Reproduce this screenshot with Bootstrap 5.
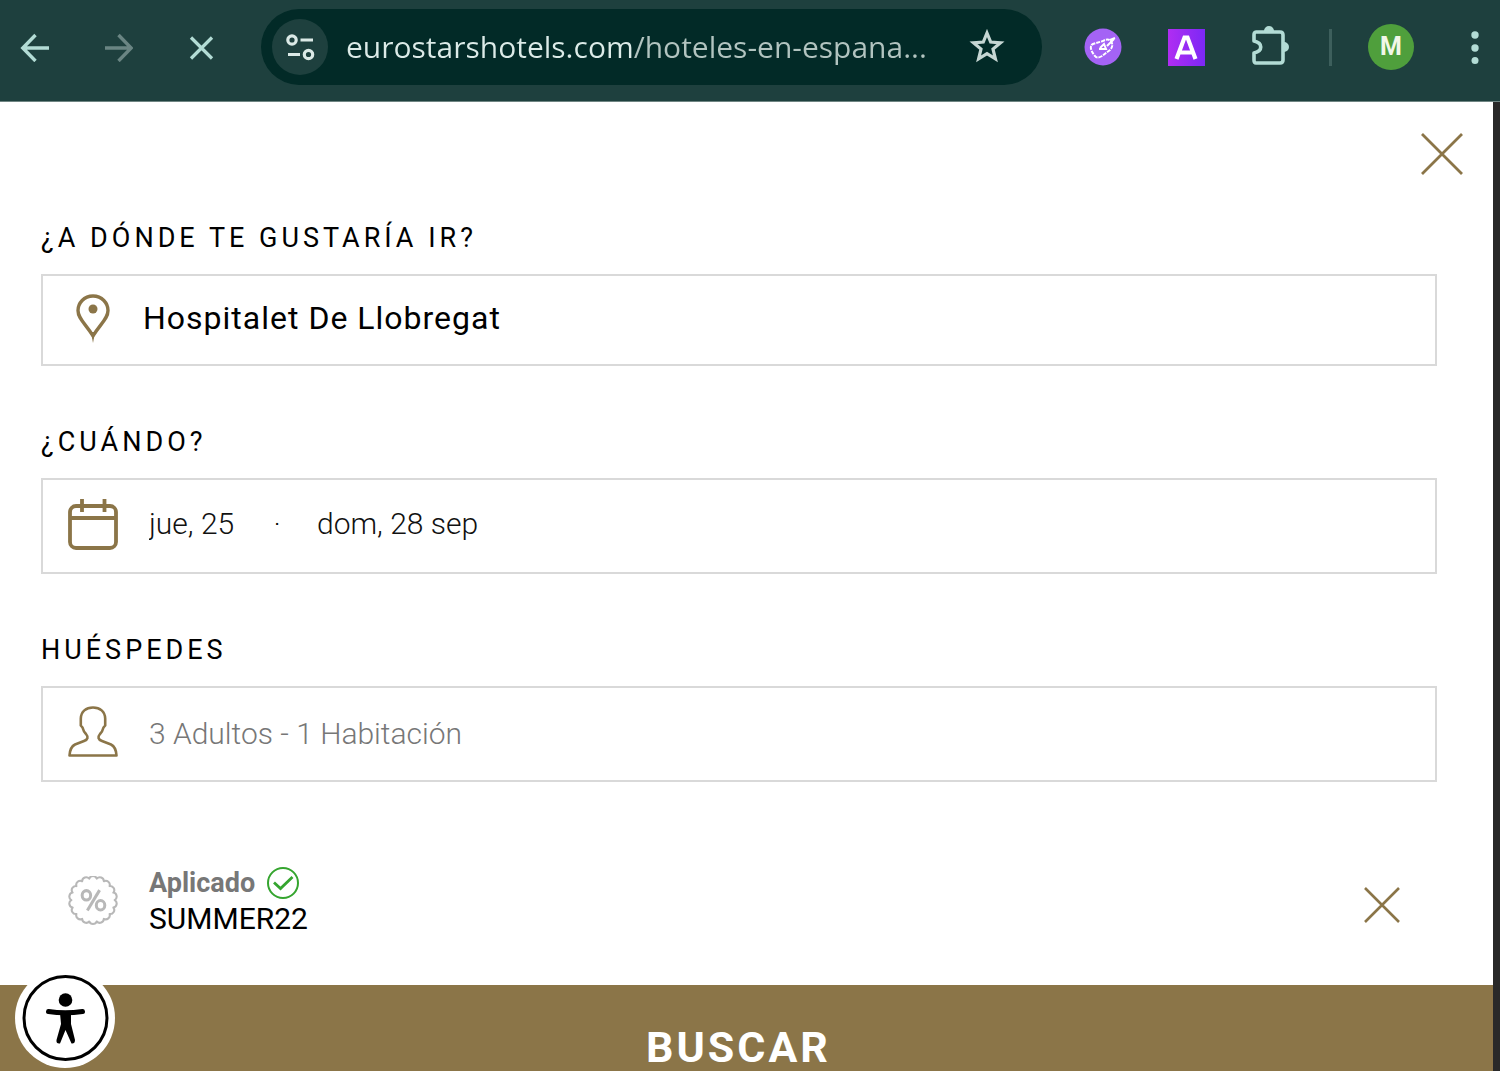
<!DOCTYPE html>
<html lang="es">
<head>
<meta charset="utf-8">
<meta name="viewport" content="width=device-width, initial-scale=1">
<title>Eurostars Hotels</title>
<link href="https://cdn.jsdelivr.net/npm/bootstrap@5.3.0/dist/css/bootstrap.min.css" rel="stylesheet">
<style>
  :root { --gold: #8b7548; --bar: #1e403e; --mint: #b3dcd5; }
  body { font-family: Roboto, "Liberation Sans", sans-serif; color: #000; }
  button { color: inherit; }
  svg { display: block; flex: none; }
  .toolbar { background: var(--bar); color: var(--mint); padding: 9px 0 16px; border-bottom: 1px solid #6f8583; }
  .tool-btn { width: 56px; height: 56px; }
  .nav-set { gap: 27px; padding: 0 32px 0 7px; }
  .ext-set { gap: 28px; padding: 0 30px 0 33px; }
  .omnibox { background: #022a27; height: 76px; padding: 0 37px 0 11px; }
  .site-info { background: var(--bar); width: 56px; height: 56px; color: #dbe9e6; }
  .address { font: 500 30px/40px "Open Sans", "Noto Sans", sans-serif; color: transparent; min-width: 0;
    background: linear-gradient(90deg, #dcebe8 288px, #b2c4c0 288px); -webkit-background-clip: text; background-clip: text; margin-left: 18px; }
  .tool-sep { width: 3px; height: 37px; background: #3d5f5c; }
  .avatar { width: 46px; height: 46px; background: #4f9f3c; color: #f2f7e8; font-size: 25px; line-height: 46px; margin: 0 36px; }
  .menu-btn { width: 50px; height: 56px; }
  .side-edge { width: 7px; background: #292929; }
  .gold { color: var(--gold); }
  .panel-head { padding: 24px 22px 0; height: 120px; }
  .fields { padding: 0 56px 0 41px; }
  .field-label { font-size: 27px; line-height: 32px; letter-spacing: 4px; margin-bottom: 20px; display: block; }
  .field-group { margin-bottom: 60px; }
  .field-box { border: 2px solid #d9d9d9; height: 96px; padding: 0 25px; gap: 31px; }
  .field-box.place { height: 92px; gap: 25px; padding-bottom: 4px; }
  .field-box.dates { padding-bottom: 4px; }
  .plain-input { border: 0; outline: 0; background: none; padding: 0; min-width: 0; color: #111; font-size: 30px; line-height: 40px; font-weight: 300; }
  .place .plain-input { font-size: 32px; font-weight: 400; letter-spacing: 1px; color: #000; }
  .date-in { width: 88px; }
  .date-dot { font-size: 20px; width: 20px; margin: 0 30px; }
  .guests .plain-input { color: #777; }
  .coupon { padding: 23px 37px 48px 27px; gap: 31px; }
  .coupon-state { font-size: 27px; line-height: 36px; color: #777; gap: 12px; }
  .coupon-code { font-size: 30px; line-height: 36px; }
  .search-btn { background: var(--gold); height: 124px; font-size: 43px; line-height: 60px; letter-spacing: 3px; padding: 0 16px 0 0; }
  .access-btn { left: 15px; bottom: 3px; width: 100px; height: 100px; }
</style>
<script src="https://cdn.jsdelivr.net/npm/bootstrap@5.3.0/dist/js/bootstrap.bundle.min.js"></script>
</head>
<body class="vh-100 d-flex flex-column overflow-hidden">
<header class="toolbar d-flex align-items-center flex-shrink-0">
  <div class="nav-set d-flex">
    <button class="tool-btn btn p-0 border-0 d-flex align-items-center justify-content-center" aria-label="Atrás">
      <svg width="30" height="30" viewBox="0 0 30 30" fill="none" stroke="#b3dcd5" stroke-width="3.4"><path d="M29 16H3M15.500 3 2.800 16 15.500 29"/></svg>
    </button>
    <button class="tool-btn btn p-0 border-0 d-flex align-items-center justify-content-center" aria-label="Adelante">
      <svg width="30" height="30" viewBox="0 0 30 30" fill="none" stroke="#6a8583" stroke-width="3.400"><path d="M2 16H28M15.500 3 28.200 16 15.500 29"/></svg>
    </button>
    <button class="tool-btn btn p-0 border-0 d-flex align-items-center justify-content-center" aria-label="Detener">
      <svg width="26" height="26" viewBox="0 0 26 26" fill="none" stroke="#b3dcd5" stroke-width="3.200"><path d="M3 3.500 24 24.500M24 3.500 3 24.500"/></svg>
    </button>
  </div>
  <div class="omnibox rounded-pill d-flex align-items-center flex-grow-1">
    <button class="site-info btn p-0 border-0 rounded-circle d-flex align-items-center justify-content-center flex-shrink-0" aria-label="Información del sitio">
      <svg width="30" height="30" viewBox="0 0 30 30" fill="none" stroke="currentColor" stroke-width="3.200"><circle cx="7" cy="8" r="4.200"/><path d="M15.500 8H28M3 22.500H15"/><circle cx="23.500" cy="22.500" r="4.200"/></svg>
    </button>
    <input class="address border-0 p-0 flex-grow-1" type="text" aria-label="Dirección" value="eurostarshotels.com/hoteles-en-espana...">
    <button class="btn p-0 border-0 flex-shrink-0" aria-label="Guardar en marcadores">
      <svg width="36" height="36" viewBox="0 0 36 36" fill="none" stroke="#c6d6d3" stroke-width="3.200"><path d="M18 4 21.700 13 31.500 13.800 24 20.100 26.400 29.800 18 24.600 9.600 29.800 12 20.100 4.500 13.800 14.300 13Z"/></svg>
    </button>
  </div>
  <div class="ext-set d-flex">
    <button class="tool-btn btn p-0 border-0 d-flex align-items-center justify-content-center" aria-label="Extensión de cupones">
      <svg width="38" height="38" viewBox="0 0 38 38"><circle cx="19" cy="19" r="18.500" fill="#a463f5"/><g fill="none" stroke="#fff" stroke-width="2"><path d="M7 18Q6 22 11 28Q13 31 18 28L26 22Q30 18 27 13Q24 10 19 13L9 16Q7 17 7 18" stroke-dasharray="4 1"/><path d="M16 20 20 16 22 21 15 21M23 18 30 11M26 12 31 10"/></g></svg>
    </button>
    <button class="tool-btn btn p-0 border-0 d-flex align-items-center justify-content-center" aria-label="Extensión A">
      <svg width="38" height="38" viewBox="0 0 38 38"><defs><linearGradient id="violet"><stop stop-color="#b02df2"/><stop offset="1" stop-color="#7c28f5"/></linearGradient></defs><rect x="0" y="1" width="37" height="37" fill="url(#violet)"/><path d="M8.500 31 16.500 9.500H19.500L27.500 31M12 24.500H24" fill="none" stroke="#fff" stroke-width="4.200"/></svg>
    </button>
    <button class="tool-btn btn p-0 border-0 d-flex align-items-center justify-content-center" aria-label="Extensiones">
      <svg width="40" height="42" viewBox="0 0 40 42"><path d="M5 6H29Q32 6 32 9V34Q32 37 29 37H5Q3 37 3 34V27C12 25 12 17 3 15V9Q3 6 5 6Z" fill="none" stroke="#b3dcd5" stroke-width="3.600" stroke-linejoin="round"/><path d="M13 5a5 5 0 0 1 10 0zM33 16a5 5 0 0 1 0 10z" fill="#b3dcd5"/></svg>
    </button>
  </div>
  <div class="tool-sep"></div>
  <button class="avatar btn p-0 border-0 rounded-circle fw-bold" aria-label="Perfil M">M</button>
  <button class="menu-btn btn p-0 border-0 d-flex align-items-center justify-content-center" aria-label="Menú">
    <svg width="8" height="34" viewBox="0 0 8 34" fill="#b3dcd5"><circle cx="4" cy="5" r="3.700"/><circle cx="4" cy="18" r="3.700"/><circle cx="4" cy="30.500" r="3.500"/></svg>
  </button>
</header>

<div class="d-flex flex-grow-1 overflow-hidden">
  <main class="flex-grow-1">
    <div class="panel-head d-flex justify-content-end align-items-start">
      <button class="btn p-0 border-0 gold m-1" aria-label="Cerrar">
        <svg width="50" height="50" viewBox="0 0 50 50" fill="none" stroke="currentColor" stroke-width="2.800"><path d="M5 4 45 44M45 4 5 44"/></svg>
      </button>
    </div>
    <form class="fields">
      <div class="field-group">
        <label class="field-label" for="destino">¿A DÓNDE TE GUSTARÍA IR?</label>
        <div class="field-box place d-flex align-items-center">
          <svg class="gold" width="50" height="52" viewBox="0 0 50 52"><path d="M25 4C16 4 10 11 10 18.500C10 27 18 32 25 44C32 32 40 27 40 18.500C40 11 34 4 25 4Z" fill="none" stroke="currentColor" stroke-width="3.400"/><circle cx="25" cy="17" r="4.500" fill="currentColor"/><path d="M23 40H27L25 51Z" fill="currentColor"/></svg>
          <input class="plain-input flex-grow-1" id="destino" type="text" value="Hospitalet De Llobregat">
        </div>
      </div>
      <div class="field-group">
        <label class="field-label" for="entrada">¿CUÁNDO?</label>
        <div class="field-box dates d-flex align-items-center">
          <svg class="gold" width="50" height="52" viewBox="0 0 50 52" fill="none" stroke="currentColor" stroke-width="3.800"><rect x="2" y="8" width="46" height="42" rx="6"/><path d="M2 20H48M14 1V14M36.500 1V14"/></svg>
          <div class="d-flex align-items-center flex-grow-1">
            <input class="plain-input date-in" id="entrada" type="text" value="jue, 25">
            <span class="date-dot text-center">·</span>
            <input class="plain-input flex-grow-1" type="text" aria-label="Salida" value="dom, 28 sep">
          </div>
        </div>
      </div>
      <div class="field-group">
        <label class="field-label" for="huespedes">HUÉSPEDES</label>
        <div class="field-box guests d-flex align-items-center">
          <svg class="gold" width="50" height="56" viewBox="0 0 50 56" fill="none" stroke="currentColor" stroke-width="2.600" stroke-linejoin="round"><path d="M1.500 49.500Q2 41 7 38.500L16 35C20 33.500 20.500 31 18 28Q15.500 25.500 14.500 21.500L12.800 19.500V12.500C13 5.500 18 1.500 25 1.500S37 5.500 37.200 12.500V19.500L35.500 21.500Q34.500 25.500 32 28C29.500 31 30 33.500 34 35L43 38.500Q48 41 48.500 49.500Z"/></svg>
          <input class="plain-input flex-grow-1" id="huespedes" type="text" value="3 Adultos - 1 Habitación">
        </div>
      </div>
      <div class="coupon d-flex align-items-center">
        <svg width="50" height="50" viewBox="-26.500 -25.500 53 53" fill="none" stroke="#b8b8b8"><path stroke-width="2.200" stroke-linejoin="round" d="M23 0A4.300 4.300 0 0 1 21.600 7.900A4.300 4.300 0 0 1 17.600 14.800A4.300 4.300 0 0 1 11.500 19.900A4.300 4.300 0 0 1 4 22.700A4.300 4.300 0 0 1-4 22.700A4.300 4.300 0 0 1-11.500 19.900A4.300 4.300 0 0 1-17.600 14.800A4.300 4.300 0 0 1-21.600 7.900A4.300 4.300 0 0 1-23 0A4.300 4.300 0 0 1-21.600-7.900A4.300 4.300 0 0 1-17.600-14.800A4.300 4.300 0 0 1-11.500-19.900A4.300 4.300 0 0 1-4-22.700A4.300 4.300 0 0 1 4-22.700A4.300 4.300 0 0 1 11.500-19.900A4.300 4.300 0 0 1 17.600-14.800A4.300 4.300 0 0 1 21.600-7.900A4.300 4.300 0 0 1 23 0Z"/><g stroke-width="3.200"><ellipse cx="-7" cy="-5" rx="4.500" ry="5"/><ellipse cx="8" cy="5.500" rx="4.500" ry="5"/><path d="M7-10.500-6 11"/></g></svg>
        <div class="flex-grow-1">
          <div class="coupon-state d-flex align-items-center fw-bold">Aplicado
            <svg width="32" height="34" viewBox="0 0 32 34" fill="none" stroke="#35a52f"><circle cx="16" cy="17" r="15" stroke-width="2"/><path d="M7 16.500 13.500 22.500 25.500 11" stroke-width="2.800"/></svg>
          </div>
          <div class="coupon-code">SUMMER22</div>
        </div>
        <button type="button" class="btn p-0 pt-2 border-0 gold" aria-label="Quitar cupón">
          <svg width="36" height="36" viewBox="0 0 36 36" fill="none" stroke="currentColor" stroke-width="2.600"><path d="M1 1 35 35M35 1 1 35"/></svg>
        </button>
      </div>
    </form>
    <button class="search-btn btn rounded-0 border-0 w-100 text-white fw-bold">BUSCAR</button>
  </main>
  <div class="side-edge flex-shrink-0"></div>
</div>

<button class="access-btn position-fixed btn p-0 border-0 rounded-circle bg-white" aria-label="Accesibilidad">
  <svg width="100" height="100" viewBox="0 0 100 100"><circle cx="50.500" cy="50" r="41.500" fill="none" stroke="#000" stroke-width="3"/><circle cx="50.500" cy="32" r="6.800"/><path d="M33.500 43.500Q50 46 67.500 43.500" fill="none" stroke="#000" stroke-width="5" stroke-linecap="round"/><path d="M45 45H56V56L60 72Q60 76 56.500 75.500L50.500 62 45 75.500Q41 76 41.500 72L46 56Z"/></svg>
</button>
</body>
</html>
